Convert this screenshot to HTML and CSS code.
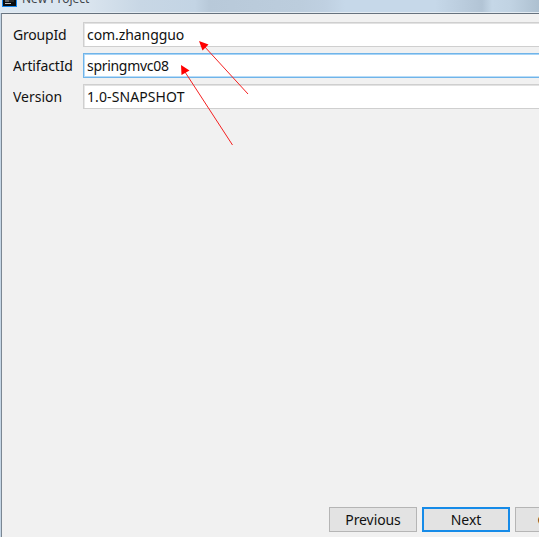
FILE: index.html
```html
<!DOCTYPE html>
<html lang="en">
<head>
<meta charset="utf-8">
<title>New Project</title>
<link rel="stylesheet" href="styles.css">
</head>
<body>
<div class="window">
  <header class="titlebar">
    <svg class="app-icon" width="15" height="17" viewBox="0 0 15 17"><rect width="15" height="17" fill="#1687ee"/><rect x="1" width="13" height="16" fill="#090b0d"/><path d="M3 11h4M3 13.500h6" stroke="#bbb" stroke-width="1"/><path d="M7 11h5" stroke="#444"/></svg>
    <span class="title">New Project</span>
  </header>
  <main class="dialog">
    <form class="fields">
      <label class="row"><span class="label group">GroupId</span><span class="field"><span class="value v-group">com.zhangguo</span></span></label>
      <label class="row"><span class="label artifact">ArtifactId</span><span class="field focused"><span class="value v-artifact">springmvc08</span></span></label>
      <label class="row"><span class="label version">Version</span><span class="field"><span class="value v-version">1.0-SNAPSHOT</span></span></label>
    </form>
    <footer class="actions">
      <button class="btn"><span class="caption">Previous</span></button>
      <button class="btn primary"><span class="caption">Next</span></button>
      <button class="btn"><span class="caption">Cancel</span></button>
    </footer>
  </main>
  <svg class="arrows" width="539" height="537" viewBox="0 0 539 537">
    <g stroke="#f52020" stroke-width="1" fill="none"><path d="M204 46L248 94M185 72L232.500 145"/></g>
    <path fill="#ff0000" d="M199 41L208.500 44.500L202.500 50.500ZM181 65L189.500 70.500L181.500 75Z"/>
  </svg>
</div>
</body>
</html>
```
FILE: styles.css
```css
* { box-sizing: border-box; }
body { margin: 0; }
.window {
  position: relative;
  width: 539px;
  height: 537px;
  overflow: hidden;
  display: flex;
  flex-direction: column;
  background: #c4d5e5;
  font-family: "Noto Sans", sans-serif;
  font-size: 14px;
  color: #111;
}
.titlebar {
  flex: 0 0 13px;
  display: flex;
  align-items: flex-start;
  gap: 5px;
  padding-left: 2px;
  overflow: hidden;
  border-bottom: 1px solid #e3ebf2;
  background: linear-gradient(90deg, #dce7f1 0, #d9e4ee 90px, #c8d7e5 140px, #c3d4e4 195px, #b8c9d9 209px, #bccddd 300px, #bfd0e1 325px, #c6d8e9 345px, #c6d8e9 435px, #b2c4d5 482px, #c5d7e7 492px, #c1d3e3 510px, #adc0d0 539px);
}
.app-icon { flex: none; margin-top: -10px; }
.title { font-size: 12px; line-height: 16px; margin-top: -9px; color: #41464c; }
.dialog {
  flex: 1;
  display: flex;
  flex-direction: column;
  justify-content: space-between;
  margin-left: 1px;
  border-top: 1px solid #66727e;
  border-left: 1px solid #7b8793;
  background: #f1f1f1;
}
.fields { display: flex; flex-direction: column; gap: 6px; padding: 8px 0 0 11px; }
.row { display: flex; height: 25px; line-height: 23px; }
.label { flex: 0 0 70px; padding-top: 1px; white-space: nowrap; transform: scaleY(1.06); }
.value, .caption { display: inline-block; transform: scaleY(1.06); }
.group { letter-spacing: -0.2px; }
.artifact { letter-spacing: -0.15px; }
.v-group { letter-spacing: -0.08px; }
.v-artifact { letter-spacing: -0.3px; }
.v-version { letter-spacing: 0.1px; }
.field {
  flex: 1;
  padding-left: 3px;
  border: 1px solid #cfcfcf;
  border-right: 0;
  box-shadow: inset 0 1px #e2e2e2, inset 1px 0 #e7e7e7;
  background: #fff;
  white-space: nowrap;
}
.focused { border-color: #70b4e9; box-shadow: inset 0 1px #a7d4f6, inset 1px 0 #b9ddf8, inset 0 -1px #b9ddf8; }
.actions { display: flex; gap: 5px; padding: 0 0 5px 327px; }
.btn {
  flex: 0 0 88px;
  height: 25px;
  padding: 0;
  border: 1px solid #b5b5b5;
  background: #e3e3e3;
  color: #111;
  font: inherit;
  line-height: 22px;
}
.primary { border: 2px solid #168be8; line-height: 20px; }
.caption { letter-spacing: -0.1px; }
.arrows { position: absolute; inset: 0; pointer-events: none; }
```
